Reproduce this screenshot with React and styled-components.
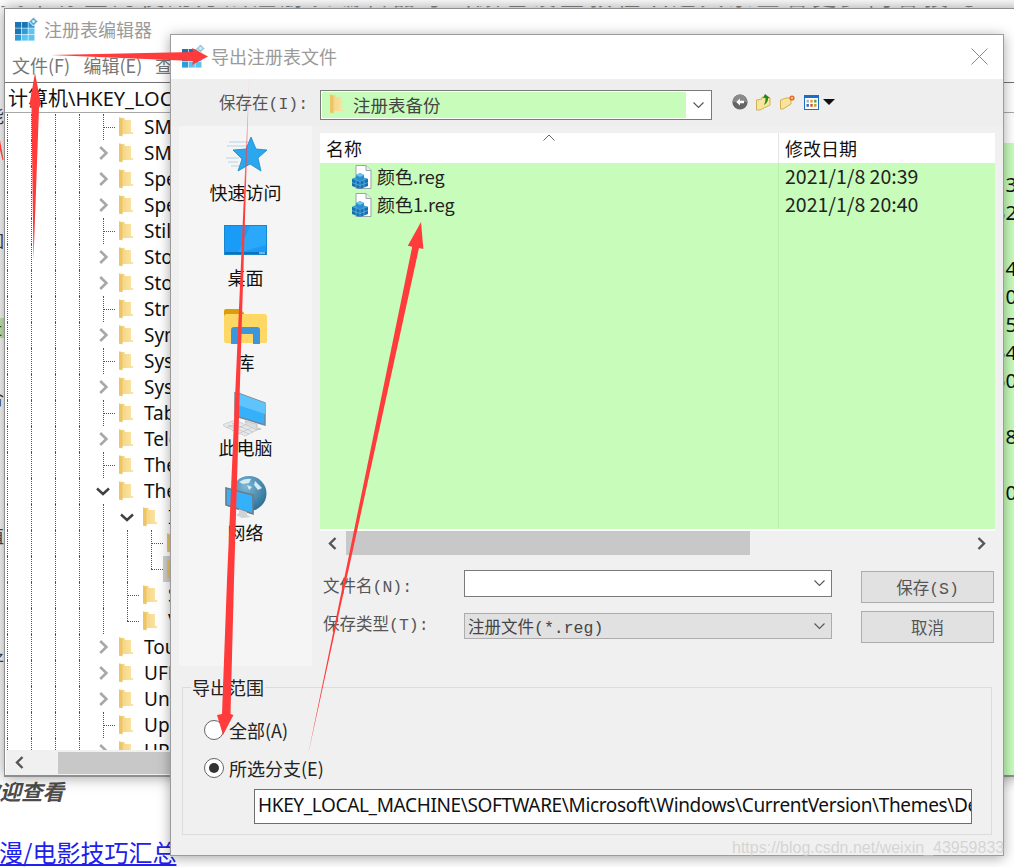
import React from "react";
import styled, { createGlobalStyle } from "styled-components";

const CJK = `"Noto Sans CJK SC", "Noto Sans", sans-serif`;
const LATIN = `"Noto Sans", "Noto Sans CJK SC", sans-serif`;
// form labels of the dialog: half-width latin next to CJK
const FORM = `"Liberation Mono", "Noto Sans CJK SC", monospace`;

const GlobalStyle = createGlobalStyle`
  html, body { margin: 0; padding: 0; background: #fff; overflow: hidden; }
  * { box-sizing: border-box; }
`;

/* ---------- icons ---------- */

function RegIcon({ gray }) {
  const cells = [0, 1, 2];
  return (
    <svg width="23" height="24" viewBox="0 0 23 24">
      {cells.map((r) =>
        cells.map((c) => (
          <rect
            key={`${r}${c}`}
            x={c * 6.7}
            y={5 + r * 6.4}
            width="6.1"
            height="5.8"
            fill={r + c < 2 ? "#1b75b5" : r + c < 3 ? "#2f9bd8" : "#5cc4f0"}
          />
        ))
      )}
      <path d="M18.5 0 L23 4.5 L18.5 9 L14 4.5 Z" fill={gray ? "#9cc8dc" : "#5aa9cf"} stroke="#fff" strokeWidth="1" />
      <circle cx="18.5" cy="4.5" r="1.4" fill="#d8f0fa" />
    </svg>
  );
}

function TreeFolder() {
  return (
    <svg width="15" height="20" viewBox="0 0 15 20">
      <defs>
        <linearGradient id="tf" x1="0" y1="0" x2="1" y2="0">
          <stop offset="0" stopColor="#f3d27c" />
          <stop offset="1" stopColor="#fbe5a8" />
        </linearGradient>
      </defs>
      <path d="M0 0.5 L5.5 1 L6 3 H12 V15 H14.5 L14 17 H5 L0 18.5 Z" fill="url(#tf)" />
      <path d="M0 0.5 L3.5 2 V19.5 L0 18.5 Z" fill="#eec566" />
    </svg>
  );
}

function Chevron({ down }) {
  return down ? (
    <svg width="14" height="9" viewBox="0 0 14 9">
      <polyline points="1,1.5 7,7 13,1.5" fill="none" stroke="#404040" strokeWidth="2.4" />
    </svg>
  ) : (
    <svg width="9" height="14" viewBox="0 0 9 14">
      <polyline points="1.2,1 7.4,7 1.2,13" fill="none" stroke="#a8a8a8" strokeWidth="2.6" />
    </svg>
  );
}

function SmallCaret() {
  return (
    <svg width="11" height="7" viewBox="0 0 11 7">
      <polyline points="0.5,0.5 5.5,5.5 10.5,0.5" fill="none" stroke="#555" strokeWidth="1.1" />
    </svg>
  );
}

function ScrollArrow({ right }) {
  return (
    <svg width="9" height="13" viewBox="0 0 9 13">
      <polyline
        points={right ? "1.5,1 7,6.5 1.5,12" : "7.5,1 2,6.5 7.5,12"}
        fill="none"
        stroke="#555"
        strokeWidth="2.4"
      />
    </svg>
  );
}

function StarIcon() {
  return (
    <svg width="42" height="40" viewBox="0 0 42 40">
      <path d="M4 7 H24 M2 11 H22 M1 23 H14 M3 27 H13 M6 31 H14" stroke="#b4d6ec" strokeWidth="1.2" />
      <path
        d="M26 2 L31 14 L42 15 L33 23 L36 36 L25 29 L13 36 L17 24 L8 15 L21 14 Z"
        fill="#2ba7f0"
        stroke="#1a86c9"
        strokeWidth="0.8"
      />
    </svg>
  );
}

function DesktopIcon() {
  return (
    <svg width="43" height="30" viewBox="0 0 43 30">
      <rect x="0.5" y="0.5" width="42" height="29" fill="#189cf7" stroke="#1787cf" />
      <path d="M26 1 H42 V20 L14 28 Z" fill="#2aa8fa" />
      <rect x="1" y="27" width="41" height="2" fill="#1271b5" />
      <rect x="35" y="27.5" width="6" height="1" fill="#e8f6ff" />
    </svg>
  );
}

function LibraryIcon() {
  return (
    <svg width="43" height="35" viewBox="0 0 43 35">
      <path d="M0 2 Q0 0 2 0 H16 L20 4 V10 H0 Z" fill="#dd9d0a" />
      <path d="M0 8 Q0 5 3 5 H40 Q43 5 43 8 V32 Q43 34 40 34 H3 Q0 34 0 32 Z" fill="#ffd765" />
      <path d="M7 35 V21 Q7 18 10 18 H33 Q36 18 36 21 V35 H29 V25 H14 V35 Z" fill="#3d96dc" />
    </svg>
  );
}

function PcIcon() {
  return (
    <svg width="46" height="46" viewBox="2 0 46 46">
      <path d="M14 0 L44 11 V33 L14 24 Z" fill="#35b0fb" stroke="#77828a" strokeWidth="1.4" />
      <path d="M14 0 L44 11 V22 L14 12 Z" fill="#60c4fc" />
      <path d="M24 29 L36 32 V36 L40 37 L30 39 L20 36 L26 34 Z" fill="#d8dcdf" stroke="#a9aeb2" strokeWidth="0.6" />
      <path d="M1 33 L14 28 L36 38 L24 44 Z" fill="#e6e8ea" stroke="#c0c4c7" strokeWidth="0.7" />
      <path d="M7 33 L28 42 M11 31 L32 40 M5 36 L18 31 M11 39 L24 33 M17 42 L30 36" stroke="#b4b8bb" strokeWidth="0.6" />
    </svg>
  );
}

function NetworkIcon() {
  return (
    <svg width="42" height="42" viewBox="0 0 42 42">
      <defs>
        <radialGradient id="globe" cx="0.4" cy="0.3" r="0.8">
          <stop offset="0" stopColor="#7db8d6" />
          <stop offset="1" stopColor="#22688f" />
        </radialGradient>
      </defs>
      <circle cx="24" cy="17.5" r="17.5" fill="url(#globe)" />
      <path d="M14 6 Q20 2 26 3 L24 7 L18 8 Z M30 5 L37 12 L33 14 L29 9 Z M22 9 L27 11 L24 14 Z" fill="#d5ecf5" />
      <path d="M1 12 L28 19 V38 L1 29 Z" fill="#35b0fb" stroke="#6f7a82" strokeWidth="1.6" />
      <path d="M14 33 L22 36 V39 L26 41 L17 42 L11 39 L14 37 Z" fill="#cfd3d6" />
    </svg>
  );
}

function BackIcon() {
  return (
    <svg width="16" height="16" viewBox="0 0 16 16">
      <circle cx="8" cy="8" r="7.6" fill="#666" />
      <path d="M0.6 8 A7.4 7.4 0 0 1 15.4 8 Z" fill="#8a8a8a" />
      <path d="M8 4.4 L4.2 8 L8 11.6 V9.2 H12 V6.8 H8 Z" fill="#fff" />
    </svg>
  );
}

function UpIcon() {
  return (
    <svg width="16" height="18" viewBox="0 0 16 18">
      <path d="M0.5 7 L6 6 V4 L14 5 V12 L4 17 H0.5 Z" fill="#f8e49a" stroke="#c9a33a" strokeWidth="0.8" />
      <path d="M9 1 L14 5 H12 Q12.5 9 8 12 Q10 8 9.5 5 H7 Z" fill="#1f8a1f" />
    </svg>
  );
}

function NewFolderIcon() {
  return (
    <svg width="16" height="16" viewBox="0 0 16 16">
      <path d="M0.5 6 L6 4 H11 V10 L3 15 H0.5 Z" fill="#f8e49a" stroke="#c9a33a" strokeWidth="0.8" />
      <circle cx="12" cy="4" r="2.6" fill="#ef6a2a" />
      <circle cx="12" cy="4" r="1" fill="#ffe7a0" />
    </svg>
  );
}

function ViewIcon() {
  const dots = ["#b0b0b0", "#e0a030", "#55a060", "#3070c0", "#e05030", "#d0a020"];
  return (
    <svg width="15" height="15" viewBox="0 0 15 15">
      <rect x="0.5" y="0.5" width="14" height="14" fill="#fff" stroke="#1a6fc4" />
      <rect x="0.5" y="0.5" width="14" height="2.5" fill="#1a6fc4" />
      {dots.map((c, i) => (
        <rect key={c} x={2.5 + (i % 3) * 3.8} y={4.8 + Math.floor(i / 3) * 4.2} width="2.4" height="2.8" fill={c} />
      ))}
    </svg>
  );
}

function RegFileIcon() {
  return (
    <svg width="21" height="24" viewBox="0 0 21 24">
      <path d="M5 0.5 H15 L20 5.5 V23.5 H5 Z" fill="#fff" stroke="#9aa3a8" />
      <path d="M15 0.5 V5.5 H20" fill="#e8ecee" stroke="#9aa3a8" />
      <path d="M1 14 L8 11 L17 14 V21 L9 24 L1 21 Z" fill="#1670b0" />
      <path d="M1 14 L9 17 L17 14 L8 11 Z" fill="#3aa5de" />
      <path d="M5 10 L9 8 L13 10 V14 L9 16 L5 14 Z" fill="#2a8fce" />
      <path d="M5 10 L9 12 L13 10 L9 8 Z" fill="#6cc6ee" />
      <path d="M5 15.5 V22.5 M9 17 V24 M13 15.5 V22.5 M1 17.5 L9 20.5 L17 17.5" stroke="#6fb8e0" strokeWidth="0.7" fill="none" />
    </svg>
  );
}

/* ---------- page behind the windows ---------- */

const Stage = styled.div`
  position: relative;
  width: 1014px;
  height: 867px;
  overflow: hidden;
  background: #fff;
`;

const Page = styled.div`
  display: flex;
  flex-direction: column;
  font-family: ${CJK};
  color: #444;
`;

const TopStrip = styled.div`
  height: 8px;
  padding-top: 6px;
`;

// only the feet of this headline stick out above the window
const TopClip = styled.div`
  height: 2px;
  overflow: hidden;
  white-space: nowrap;
  font-size: 24px;
  line-height: 24px;
  letter-spacing: 4px;
  color: #888;

  span {
    display: block;
    margin-top: -23px;
  }
`;

const EdgeLine = styled.div`
  height: 20px;
  margin-top: ${(p) => p.$gap}px;
  margin-left: -14px;
  font-size: 18px;
  line-height: 20px;
  width: 24px;
  background: ${(p) => (p.$green ? "#c7ecae" : "transparent")};
`;

const BoldLine = styled.div`
  height: 30px;
  margin-top: 106px;
  margin-left: -22px;
  font-size: 21.5px;
  line-height: 30px;
  font-weight: 700;
  font-style: italic;
  color: #4c4c4c;
`;

const PageLink = styled.a`
  display: block;
  height: 30px;
  margin-top: 31px;
  margin-left: -25px;
  font-size: 24px;
  line-height: 30px;
  color: #2020ee;
  text-decoration: underline;
`;

/* ---------- registry editor window ---------- */

const RegWindow = styled.div`
  position: absolute;
  left: 4px;
  top: 8px;
  width: 1020px;
  height: 769px;
  display: flex;
  flex-direction: column;
  background: #fff;
  border: 1px solid #8e8e8e;
  border-bottom-width: 2px;
  box-shadow: 0 0 14px rgba(0, 0, 0, 0.4);
`;

const RegTitle = styled.div`
  height: 41px;
  flex: none;
  display: flex;
  align-items: center;
  gap: 6px;
  padding: 0 0 2px 10px;
  font: 18px ${CJK};
  color: #9a9a9a;
`;

const MenuBar = styled.div`
  height: 32px;
  flex: none;
  display: flex;
  align-items: center;
  padding: 0 0 2px 7px;
  font: 18px ${CJK};
  color: #777;
`;

const MenuItem = styled.span`
  width: 71.5px;
  white-space: nowrap;
`;

const AddressBar = styled.div`
  height: 31px;
  flex: none;
  display: flex;
  align-items: center;
  padding-left: 3px;
  border-top: 1px solid #707070;
  border-bottom: 1px solid #a8a8a8;
  font: 20px ${LATIN};
  color: #111;
  white-space: nowrap;
`;

const RegBody = styled.div`
  flex: 1;
  min-height: 0;
  display: flex;
`;

const TreePane = styled.div`
  width: 500px;
  flex: none;
  display: flex;
  flex-direction: column;
  padding-left: 1px;
`;

const Tree = styled.div`
  height: 637px;
  overflow: hidden;
  padding-top: 1px;
`;

const Row = styled.div`
  position: relative;
  height: 26px;
  display: flex;
  align-items: center;
  padding-left: ${(p) => p.$level * 24 - 11}px;
  font: 19px ${LATIN};
  color: #111;
  white-space: nowrap;
`;

const Guide = styled.i`
  position: absolute;
  left: ${(p) => p.$x}px;
  top: 0;
  bottom: 0;
  border-left: 1px dotted #555;
`;

const Slot = styled.span`
  position: relative;
  width: 24px;
  height: 26px;
  flex: none;
  display: flex;
  align-items: center;
  justify-content: center;

  ${(p) =>
    p.$leaf &&
    `
    &::before {
      content: "";
      position: absolute;
      left: 12px;
      top: 0;
      bottom: ${p.$last ? "13px" : "0"};
      border-left: 1px dotted #555;
    }
    &::after {
      content: "";
      position: absolute;
      left: 12px;
      right: 0;
      top: 13px;
      border-top: 1px dotted #555;
    }
  `}
`;

const Item = styled.span`
  height: 26px;
  display: flex;
  align-items: center;
  gap: 10px;
  padding: 0 4px;
  background: ${(p) => (p.$selected ? "#cfcfcf" : "transparent")};
`;

const HScroll = styled.div`
  height: 25px;
  flex: none;
  display: flex;
  align-items: center;
  background: #f0f0f0;
  padding-left: 9px;
`;

const HThumb = styled.div`
  width: 400px;
  height: 22px;
  margin-left: 34px;
  background: #c8c8c8;
`;

const ValuePane = styled.div`
  flex: 1;
  display: flex;
  flex-direction: column;
`;

const ValueHead = styled.div`
  height: 30px;
  flex: none;
  background: #fff;
`;

const ValueList = styled.div`
  flex: 1;
  background: #c7fcbb;
  padding: 28px 6px 0 0;
  font: 20px/28px ${LATIN};
  color: #111;
  text-align: right;
`;

const ValueLine = styled.div`
  height: 28px;
`;

/* ---------- export dialog ---------- */

const Dialog = styled.div`
  position: absolute;
  left: 170px;
  top: 34px;
  width: 834px;
  height: 822px;
  display: flex;
  flex-direction: column;
  background: #f0f0f0;
  border: 1px solid #9c9c9c;
  box-shadow: 0 2px 12px rgba(0, 0, 0, 0.35);
`;

const DialogTitle = styled.div`
  position: relative;
  height: 44px;
  flex: none;
  display: flex;
  align-items: center;
  gap: 6px;
  padding: 0 0 2px 11px;
  background: #fff;
  font: 18px ${CJK};
  color: #9a9a9a;
`;

const CloseBox = styled.span`
  margin-left: auto;
  margin-right: 15px;
  display: flex;
`;

const TopRow = styled.div`
  height: 47px;
  flex: none;
  display: flex;
  align-items: flex-start;
  padding: 11px 0 0 48px;
  background: #eee;
`;

const FormLabel = styled.span`
  font: 16.5px/30px ${FORM};
  color: #555;
  white-space: nowrap;
`;

const TopLabel = styled(FormLabel)`
  width: 101px;
  flex: none;
`;

const LookIn = styled.div`
  width: 392px;
  height: 30px;
  flex: none;
  display: flex;
  align-items: center;
  border: 1px solid #7a7a7a;
  background: #fff;
`;

const LookInValue = styled.div`
  width: 364px;
  height: 26px;
  margin-left: 1px;
  display: flex;
  align-items: center;
  gap: 8px;
  padding: 0 0 2px 8px;
  background: #c7fcbb;
  font: 17.5px ${CJK};
  color: #444;
`;

const CaretBox = styled.span`
  flex: 1;
  display: flex;
  justify-content: center;
`;

const Tools = styled.div`
  height: 30px;
  margin-left: 20px;
  display: flex;
  align-items: center;
  gap: 8px;
  margin-top: -3px;
`;

const ViewDrop = styled.span`
  width: 0;
  height: 0;
  margin-left: -4px;
  border-left: 6px solid transparent;
  border-right: 6px solid transparent;
  border-top: 6px solid #111;
`;

const Main = styled.div`
  display: flex;
  flex: none;
  padding-left: 8px;
`;

const Sidebar = styled.div`
  width: 133px;
  height: 540px;
  flex: none;
  padding-top: 9px;
  display: flex;
  flex-direction: column;
  gap: 16px;
  background: #f5f5f5;
`;

const Place = styled.div`
  display: flex;
  flex-direction: column;
  align-items: center;
  gap: 5px;
  font: 18px/24px ${CJK};
  color: #111;
`;

const PlaceIcon = styled.div`
  height: 40px;
  padding-top: ${(p) => p.$drop || 0}px;
  display: flex;
  align-items: center;
  justify-content: center;
`;

const RightCol = styled.div`
  width: 675px;
  margin-left: 8px;
  padding-top: 7px;
  flex: none;
`;

const FileList = styled.div`
  height: 398px;
  display: flex;
  flex-direction: column;
  background: #c7fcbb;
  border-bottom: 2px solid #fff;
`;

const HeadRow = styled.div`
  position: relative;
  height: 30px;
  flex: none;
  display: grid;
  grid-template-columns: 459px 1fr;
  background: #fff;
  font: 18px/30px ${CJK};
  color: #111;
`;

const HeadCell = styled.div`
  padding-left: ${(p) => p.$pad}px;
  border-right: ${(p) => (p.$sep ? "1px solid #e5e5e5" : "none")};
`;

const SortMark = styled.span`
  position: absolute;
  left: 223px;
  top: 1px;
  display: flex;
`;

const FileBody = styled.div`
  flex: 1;
  display: grid;
  grid-template-columns: 459px 1fr;
`;

const NameCol = styled.div`
  border-right: 1px solid #bdecb0;
`;

const FileRow = styled.div`
  height: 28px;
  display: flex;
  align-items: center;
  gap: 5px;
  padding: 0 0 2px 31px;
  font: 18px ${CJK};
  color: #222;

  svg {
    margin-top: 2px;
  }
`;

const DateRow = styled.div`
  height: 28px;
  padding-left: 6px;
  font: 19.5px/26px ${CJK};
  color: #222;
`;

const ListScroll = styled.div`
  height: 24px;
  display: flex;
  align-items: center;
  padding: 0 9px 0 8px;
`;

const ListThumb = styled.div`
  width: 404px;
  height: 24px;
  margin-left: 9px;
  margin-right: auto;
  background: #c8c8c8;
`;

const FormGrid = styled.div`
  display: grid;
  grid-template-columns: 144px 368px 162px;
  grid-template-rows: 41px 32px;
  margin-top: 15px;
  align-items: start;
`;

const FormCaption = styled(FormLabel)`
  padding-left: 3px;
  line-height: 36px;
  margin-top: ${(p) => (p.$up ? -3 : 0)}px;
`;

const Field = styled.div`
  height: ${(p) => (p.$locked ? 26 : 27)}px;
  margin-top: ${(p) => (p.$locked ? 2 : 0)}px;
  display: flex;
  align-items: center;
  justify-content: space-between;
  padding: 0 6px 0 3px;
  background: ${(p) => (p.$locked ? "#e1e1e1" : "#fff")};
  border: 1px solid ${(p) => (p.$locked ? "#adadad" : "#7a7a7a")};
  font: 16.5px ${FORM};
  color: #444;
  white-space: nowrap;
`;

const DialogButton = styled.div`
  height: 32px;
  margin: ${(p) => (p.$first ? 1 : 0)}px 0 0 29px;
  display: flex;
  align-items: center;
  justify-content: center;
  background: #e1e1e1;
  border: 1px solid #adadad;
  font: 16.5px ${FORM};
  color: #555;
`;

const RangeGroup = styled.div`
  position: relative;
  width: 810px;
  height: 148px;
  margin: 21px 0 0 11px;
  padding: 29px 0 0 21px;
  flex: none;
  border: 1px solid #dcdcdc;
`;

const RangeLegend = styled.span`
  position: absolute;
  left: 8px;
  top: -13px;
  padding: 0 1px;
  background: #f0f0f0;
  font: 18px/24px ${CJK};
  color: #222;
`;

const RadioRow = styled.div`
  height: 26px;
  margin-bottom: 12px;
  display: flex;
  align-items: center;
  gap: 5px;
  padding-bottom: 1px;
  font: 18px ${CJK};
  color: #222;
`;

const Radio = styled.span`
  width: 20px;
  height: 20px;
  flex: none;
  display: flex;
  align-items: center;
  justify-content: center;
  background: #fff;
  border: 1px solid #666;
  border-radius: 50%;

  &::after {
    content: "";
    width: 10px;
    height: 10px;
    border-radius: 50%;
    background: ${(p) => (p.$on ? "#333" : "transparent")};
  }
`;

const BranchInput = styled.div`
  width: 718px;
  height: 35px;
  margin: -4px 0 0 50px;
  padding-left: 3px;
  overflow: hidden;
  white-space: nowrap;
  background: #fff;
  border: 1px solid #6e6e6e;
  font: 19px/30px ${LATIN};
  letter-spacing: -0.35px;
  color: #111;
`;

const ArrowLayer = styled.svg`
  position: absolute;
  left: 0;
  top: 0;
  pointer-events: none;
`;

const Watermark = styled.div`
  position: absolute;
  left: 732px;
  top: 838px;
  font: 16px/20px "Liberation Sans", sans-serif;
  color: rgba(200, 200, 200, 0.7);
  white-space: nowrap;
`;

/* ---------- data ---------- */

const rows = [
  { text: "SMI", level: 4, kind: "leaf", guides: [] },
  { text: "SMDEn", level: 4, kind: "more", guides: [] },
  { text: "SpeechEngines", level: 4, kind: "more", guides: [] },
  { text: "Speech", level: 4, kind: "more", guides: [] },
  { text: "StillImage", level: 4, kind: "leaf", guides: [] },
  { text: "Storage", level: 4, kind: "more", guides: [] },
  { text: "StorageSense", level: 4, kind: "more", guides: [] },
  { text: "StructuredQuery", level: 4, kind: "leaf", guides: [] },
  { text: "SyncMgr", level: 4, kind: "more", guides: [] },
  { text: "Sysprep", level: 4, kind: "leaf", guides: [] },
  { text: "SystemRestore", level: 4, kind: "more", guides: [] },
  { text: "TabletPC", level: 4, kind: "leaf", guides: [] },
  { text: "Telephony", level: 4, kind: "more", guides: [] },
  { text: "ThemeManager", level: 4, kind: "leaf", guides: [] },
  { text: "Themes", level: 4, kind: "open", guides: [] },
  { text: "InstalledThemes", level: 5, kind: "open", guides: [103] },
  { text: "Default", level: 6, kind: "leaf", guides: [103, 127] },
  { text: "Selected", level: 6, kind: "last", guides: [103, 127], selected: true },
  { text: "Schemes", level: 5, kind: "leaf", guides: [103] },
  { text: "VisualStyles", level: 5, kind: "last", guides: [103] },
  { text: "Touch", level: 4, kind: "more", guides: [] },
  { text: "UFH", level: 4, kind: "more", guides: [] },
  { text: "Uninstall", level: 4, kind: "more", guides: [] },
  { text: "Update", level: 4, kind: "leaf", guides: [] },
  { text: "UPnP", level: 4, kind: "more", guides: [] },
];

const baseGuides = [7, 31, 55, 79];
const values = ["3", "32", "", "4", "0", "5", "54", "50", "", "8", "", "0"];

const places = [
  { label: "快速访问", icon: <StarIcon /> },
  { label: "桌面", icon: <DesktopIcon /> },
  { label: "库", icon: <LibraryIcon />, drop: 2 },
  { label: "此电脑", icon: <PcIcon />, drop: 10 },
  { label: "网络", icon: <NetworkIcon />, drop: 4 },
];

function TreeRow({ row }) {
  const leaf = row.kind === "leaf" || row.kind === "last";
  return (
    <Row $level={row.level}>
      {[...baseGuides, ...row.guides].map((x) => (
        <Guide key={x} $x={x - 6} />
      ))}
      <Slot $leaf={leaf} $last={row.kind === "last"}>
        {row.kind === "more" && <Chevron />}
        {row.kind === "open" && <Chevron down />}
      </Slot>
      <Item $selected={row.selected}>
        <TreeFolder />
        {row.text}
      </Item>
    </Row>
  );
}

export default function App() {
  return (
    <Stage>
      <GlobalStyle />

      <Page>
        <TopStrip>
          <TopClip>
            <span>文章标签的使用方法注册表编辑器导出颜色设置教程欢迎大家查看更多内容技巧</span>
          </TopClip>
        </TopStrip>
        <EdgeLine $gap={97}>能</EdgeLine>
        <EdgeLine $gap={80}>/</EdgeLine>
        <EdgeLine $gap={5}>如</EdgeLine>
        <EdgeLine $gap={68} $green>ct</EdgeLine>
        <EdgeLine $gap={49}>合</EdgeLine>
        <EdgeLine $gap={118}>值</EdgeLine>
        <EdgeLine $gap={105}>好</EdgeLine>
        <BoldLine>欢迎查看</BoldLine>
        <PageLink>动漫/电影技巧汇总</PageLink>
      </Page>

      <RegWindow>
        <RegTitle>
          <RegIcon />
          注册表编辑器
        </RegTitle>
        <MenuBar>
          <MenuItem>文件(F)</MenuItem>
          <MenuItem>编辑(E)</MenuItem>
          <MenuItem>查看(V)</MenuItem>
        </MenuBar>
        <AddressBar>计算机\HKEY_LOCAL_MACHINE\SOFTWARE\Microsoft\Windows\CurrentVersion\Themes</AddressBar>
        <RegBody>
          <TreePane>
            <Tree>
              {rows.map((row) => (
                <TreeRow key={row.text} row={row} />
              ))}
            </Tree>
            <HScroll>
              <ScrollArrow />
              <HThumb />
            </HScroll>
          </TreePane>
          <ValuePane>
            <ValueHead />
            <ValueList>
              {values.map((v, i) => (
                <ValueLine key={i}>{v}</ValueLine>
              ))}
            </ValueList>
          </ValuePane>
        </RegBody>
      </RegWindow>

      <Dialog>
        <DialogTitle>
          <RegIcon gray />
          导出注册表文件
          <CloseBox>
            <svg width="17" height="17" viewBox="0 0 17 17">
              <path d="M0.5 0.5 L16.5 16.5 M16.5 0.5 L0.5 16.5" stroke="#8a8a8a" strokeWidth="1" />
            </svg>
          </CloseBox>
        </DialogTitle>

        <TopRow>
          <TopLabel>保存在(I):</TopLabel>
          <LookIn>
            <LookInValue>
              <TreeFolder />
              注册表备份
            </LookInValue>
            <CaretBox>
              <SmallCaret />
            </CaretBox>
          </LookIn>
          <Tools>
            <BackIcon />
            <UpIcon />
            <NewFolderIcon />
            <ViewIcon />
            <ViewDrop />
          </Tools>
        </TopRow>

        <Main>
          <Sidebar>
            {places.map((p) => (
              <Place key={p.label}>
                <PlaceIcon $drop={p.drop}>{p.icon}</PlaceIcon>
                {p.label}
              </Place>
            ))}
          </Sidebar>
          <RightCol>
            <FileList>
              <HeadRow>
                <HeadCell $pad={6} $sep>名称</HeadCell>
                <HeadCell $pad={6}>修改日期</HeadCell>
                <SortMark>
                  <svg width="12" height="7" viewBox="0 0 12 7">
                    <polyline points="0.5,6.5 6,1 11.5,6.5" fill="none" stroke="#666" strokeWidth="1" />
                  </svg>
                </SortMark>
              </HeadRow>
              <FileBody>
                <NameCol>
                  <FileRow>
                    <RegFileIcon />
                    颜色.reg
                  </FileRow>
                  <FileRow>
                    <RegFileIcon />
                    颜色1.reg
                  </FileRow>
                </NameCol>
                <div>
                  <DateRow>2021/1/8 20:39</DateRow>
                  <DateRow>2021/1/8 20:40</DateRow>
                </div>
              </FileBody>
            </FileList>
            <ListScroll>
              <ScrollArrow />
              <ListThumb />
              <ScrollArrow right />
            </ListScroll>
            <FormGrid>
              <FormCaption>文件名(N):</FormCaption>
              <Field>
                <span />
                <SmallCaret />
              </Field>
              <DialogButton $first>保存(S)</DialogButton>
              <FormCaption $up>保存类型(T):</FormCaption>
              <Field $locked>
                注册文件(*.reg)
                <SmallCaret />
              </Field>
              <DialogButton>取消</DialogButton>
            </FormGrid>
          </RightCol>
        </Main>

        <RangeGroup>
          <RangeLegend>导出范围</RangeLegend>
          <RadioRow>
            <Radio />
            全部(A)
          </RadioRow>
          <RadioRow>
            <Radio $on />
            所选分支(E)
          </RadioRow>
          <BranchInput>HKEY_LOCAL_MACHINE\SOFTWARE\Microsoft\Windows\CurrentVersion\Themes\Default</BranchInput>
        </RangeGroup>
      </Dialog>

      <Watermark>https://blog.csdn.net/weixin_43959833</Watermark>

      <ArrowLayer width="1014" height="867" viewBox="0 0 1014 867">
        <defs>
          <linearGradient id="fade" gradientUnits="userSpaceOnUse" x1="0" y1="70" x2="0" y2="200">
            <stop offset="0" stopColor="#ff3b3b" stopOpacity="0.1" />
            <stop offset="0.5" stopColor="#ff3b3b" stopOpacity="0.55" />
            <stop offset="1" stopColor="#ff3b3b" />
          </linearGradient>
        </defs>
        <polygon points="33.5,260 31.5,108 29.5,104 35,73 41,104 39,108" fill="#ff3b3b" />
        <polygon points="51,55 193,52 192,48 208,56.5 192,65 193,61" fill="#ff3b3b" />
        <polygon points="249.5,70 234,580 230.5,714 233.5,715 223,735 217,715 222,714 227,580" fill="url(#fade)" />
        <polygon points="308,755 412.2,246.7 407.8,245.7 421,222 423.4,249 419,248" fill="#ff3b3b" />
        <polygon points="0,140 3.5,160 2.5,160 0,150" fill="#ff3b3b" />
      </ArrowLayer>
    </Stage>
  );
}
